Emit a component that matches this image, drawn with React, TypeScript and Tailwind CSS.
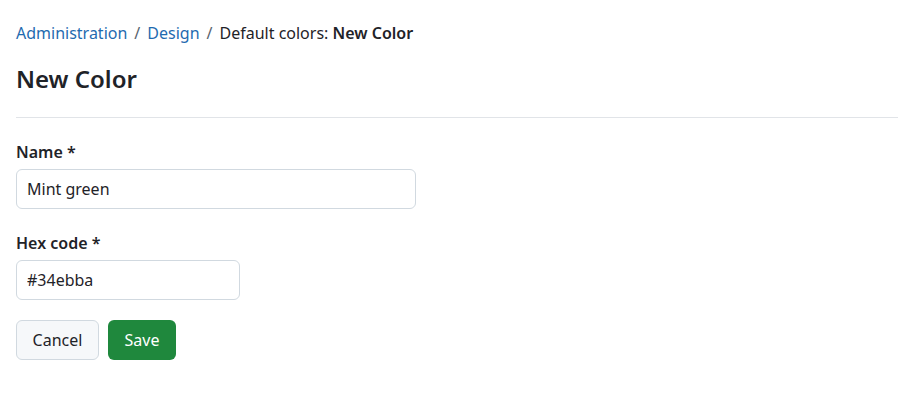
export default function App() {
  return (
    <main
      className="min-h-screen bg-white pl-4 text-[#1f2328]"
      style={{ fontFamily: '"Noto Sans", "Open Sans", sans-serif' }}
    >
      {/* breadcrumb */}
      <nav className="flex items-center pt-[21px] text-[16px] leading-6">
        <a href="#" className="text-[#1f6bb0]">Administration</a>
        <span className="mx-[7px] text-[#59636e]">/</span>
        <a href="#" className="text-[#1f6bb0]">Design</a>
        <span className="mx-[7px] text-[#59636e]">/</span>
        <span>
          Default colors: <strong className="font-semibold">New Color</strong>
        </span>
      </nav>

      <h1 className="mt-[18px] text-[24px] font-semibold leading-8">New Color</h1>

      <hr className="mt-[22px] border-t border-[#e1e4e8]" />

      <form className="flex flex-col pt-[22px]">
        <label className="text-[16px] font-semibold leading-6">Name *</label>
        <input
          type="text"
          defaultValue="Mint green"
          className="mt-[5px] h-10 w-[400px] rounded-[6px] border border-[#d1d9e0] px-[10px] text-[16px] outline-none"
        />

        <label className="mt-[22px] text-[16px] font-semibold leading-6">Hex code *</label>
        <input
          type="text"
          defaultValue="#34ebba"
          className="mt-[5px] h-10 w-[224px] rounded-[6px] border border-[#d1d9e0] px-[10px] text-[16px] outline-none"
        />

        <div className="mt-5 flex gap-[9px]">
          <button
            type="button"
            className="h-10 w-[83px] rounded-[6px] border border-[#d1d9e0] bg-[#f6f8fa] text-[16px]"
          >
            Cancel
          </button>
          <button
            type="submit"
            className="h-10 w-[68px] rounded-[6px] bg-[#1f883d] text-[16px] text-white"
          >
            Save
          </button>
        </div>
      </form>
    </main>
  );
}
